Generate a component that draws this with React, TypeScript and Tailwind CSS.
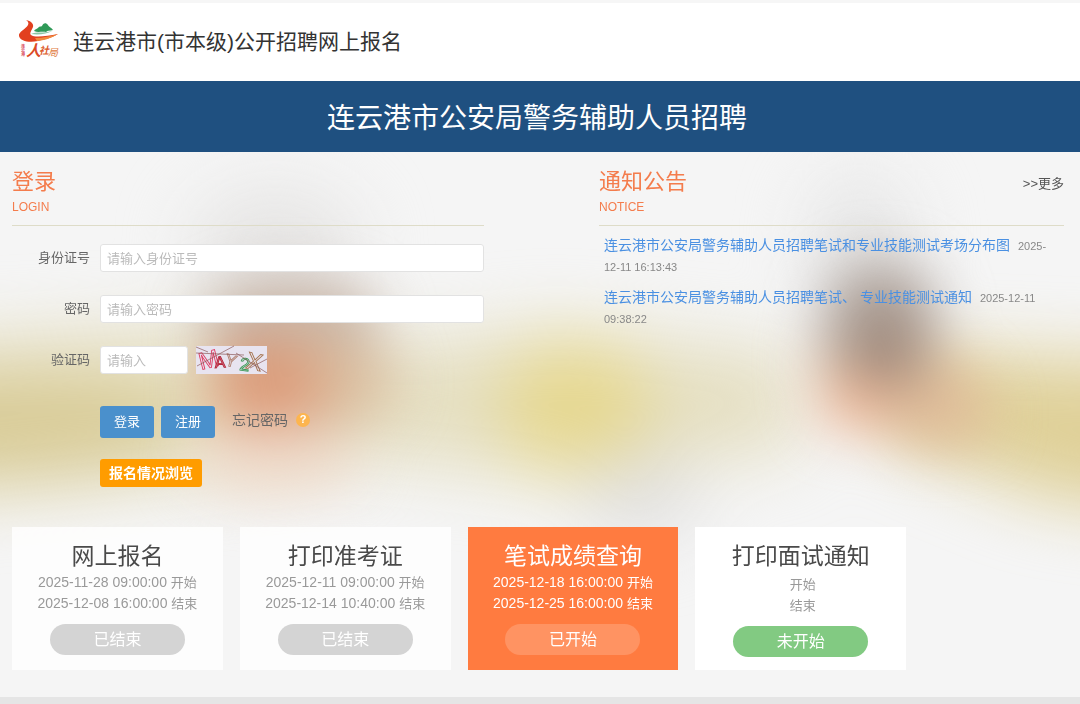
import { useState } from "react";
import type { FormEvent } from "react";

const notices = [
  {
    title: "连云港市公安局警务辅助人员招聘笔试和专业技能测试考场分布图",
    date: "2025-12-11 16:13:43",
  },
  {
    title: "连云港市公安局警务辅助人员招聘笔试、 专业技能测试通知",
    date: "2025-12-11 09:38:22",
  },
];

const steps = [
  {
    title: "网上报名",
    start: "2025-11-28 09:00:00",
    end: "2025-12-08 16:00:00",
    status: "已结束",
    card: "bg-white/80 pb-[15px]",
    heading: "text-[#4a4a4a]",
    dates: "text-[#999]",
    button: "bg-[#d4d4d4]",
  },
  {
    title: "打印准考证",
    start: "2025-12-11 09:00:00",
    end: "2025-12-14 10:40:00",
    status: "已结束",
    card: "bg-white/80 pb-[15px]",
    heading: "text-[#4a4a4a]",
    dates: "text-[#999]",
    button: "bg-[#d4d4d4]",
  },
  {
    title: "笔试成绩查询",
    start: "2025-12-18 16:00:00",
    end: "2025-12-25 16:00:00",
    status: "已开始",
    card: "bg-[#ff7b40] pb-[15px]",
    heading: "text-white",
    dates: "text-white",
    button: "bg-[#ff9362]",
  },
  {
    title: "打印面试通知",
    start: "",
    end: "",
    status: "未开始",
    card: "bg-white pb-[13px]",
    heading: "text-[#4a4a4a]",
    dates: "pt-0.5 text-[#999]",
    button: "bg-[#82ca82]",
  },
];

const inputClass =
  "h-7 rounded-[3px] border border-[#e2e2e2] bg-white px-1.5 text-[13px] text-[#333] placeholder:text-[#bbb] focus:outline-none";

function Logo() {
  return (
    <svg viewBox="0 0 44 42" className="h-[42px] w-11 shrink-0 overflow-visible" aria-hidden="true">
      <path
        d="M9 -1C14 0 17 3 16 6C15 9 12 12 14 14C18 17 30 15 41 13C37 16 29 18 21 20C12 22 3 20 2 15C1 11 9 8 11 4C12 2 11 0 9 -1Z"
        fill="#e2401f"
      />
      <path d="M18 17C26 17 34 15 41 13C36 16 30 19 20 20Z" fill="#f08a3c" />
      <path
        d="M17 10C18 8 20 8 21 7C22 5 24 6 25 5C26 2 29 1 31 4C32 6 34 6 36 9C33 10 31 9 29 11C25 10 21 12 17 10Z"
        fill="#2f9a58"
      />
      <path d="M14 13C19 10 26 13 35 10C30 13 22 14 14 13Z" fill="#8cc7a5" />
      <g fontFamily="'Noto Sans CJK SC', sans-serif">
        <text fontSize="4" fontWeight="700" fill="#d8485c">
          <tspan x="4" y="27">连</tspan>
          <tspan x="4" y="31">云</tspan>
          <tspan x="4" y="35">港</tspan>
        </text>
        <text x="9" y="35" fontSize="15" fontWeight="700" fontStyle="italic" fill="#dc4a26">人</text>
        <text x="22" y="33" fontSize="10" fontWeight="700" fontStyle="italic" fill="#dc5a2a">社</text>
        <text x="31" y="35" fontSize="10" fontStyle="italic" fill="#e07a40">局</text>
      </g>
    </svg>
  );
}

function Captcha() {
  return (
    <svg viewBox="0 0 71 28" className="h-7 w-[71px] overflow-visible" role="img" aria-label="验证码">
      <rect width="71" height="28" fill="#e8e4f0" />
      <g fontFamily="'Liberation Sans', sans-serif" fill="none" strokeWidth="0.9">
        <text fontSize="24" stroke="#dc3c62" transform="translate(5 24) rotate(-14)">M</text>
        <text fontSize="16" stroke="#b3263c" fill="#d88090" transform="translate(19 22) rotate(-4)">A</text>
        <text fontSize="17" stroke="#b08070" transform="translate(28 19) rotate(14)">Y</text>
        <text fontSize="18" stroke="#3d9a58" transform="translate(43 24) rotate(8)">2</text>
        <text fontSize="24" stroke="#a5734f" transform="translate(49 22) rotate(12)">X</text>
      </g>
      <path
        d="M0 1L12 6M1 20L38 0M0 7L48 9M40 7L71 27M54 22L71 13"
        fill="none"
        stroke="#8d5a5a"
        strokeWidth="0.7"
      />
    </svg>
  );
}

// soft out-of-focus photo behind the form
function Backdrop() {
  return (
    <svg
      viewBox="0 0 1080 545"
      preserveAspectRatio="none"
      className="absolute inset-0 h-full w-full"
      aria-hidden="true"
    >
      <defs>
        <filter id="soft" x="-80%" y="-80%" width="260%" height="260%" colorInterpolationFilters="sRGB">
          <feGaussianBlur stdDeviation="34" />
        </filter>
        <filter id="mid" x="-80%" y="-80%" width="260%" height="260%" colorInterpolationFilters="sRGB">
          <feGaussianBlur stdDeviation="27" />
        </filter>
      </defs>
      <rect width="1080" height="545" fill="#f5f5f5" />
      <g filter="url(#soft)">
        <path d="M-100 190L200 175L420 190L560 175L680 190L790 200L800 300L670 310L620 335L440 315L330 305L200 320L-100 350Z" fill="#e5dfc2" />
        <ellipse cx="20" cy="275" rx="170" ry="55" fill="#d9cc98" />
        <ellipse cx="575" cy="255" rx="75" ry="66" fill="#e6d890" />
        <ellipse cx="640" cy="345" rx="60" ry="45" fill="#e2e1e0" />
        <ellipse cx="275" cy="95" rx="85" ry="60" fill="#e6e5e4" />
        <ellipse cx="860" cy="90" rx="50" ry="70" fill="#e6e6e6" />
        <path d="M920 200L1180 210L1180 365L1040 345L880 280Z" fill="#dfd098" />
      </g>
      <g filter="url(#mid)">
        <ellipse cx="290" cy="170" rx="90" ry="42" fill="#c4b2a6" />
        <ellipse cx="300" cy="230" rx="95" ry="50" fill="#dabd9f" />
        <ellipse cx="265" cy="235" rx="58" ry="50" fill="#dc9c7a" />
        <ellipse cx="275" cy="310" rx="85" ry="34" fill="#efdccd" />
        <ellipse cx="900" cy="235" rx="95" ry="48" fill="#dfbb98" transform="rotate(24 900 235)" />
        <ellipse cx="880" cy="170" rx="58" ry="62" fill="#aea39c" />
        <ellipse cx="888" cy="198" rx="38" ry="40" fill="#a08a7c" />
        <ellipse cx="855" cy="252" rx="38" ry="26" fill="#eeb493" />
      </g>
    </svg>
  );
}

export default function App() {
  const [form, setForm] = useState({ idCard: "", password: "", code: "" });

  const handleChange = (e: { target: { name: string; value: string } }) => {
    const { name, value } = e.target;
    setForm((prev) => ({ ...prev, [name]: value }));
  };

  const handleSubmit = (e: FormEvent) => {
    e.preventDefault();
  };

  return (
    <div className="min-h-screen bg-[#e5e5e5] font-['Liberation_Sans','Noto_Sans_CJK_SC',sans-serif] text-[#666]">
      <header className="flex h-[81px] items-center gap-3 border-t-[3px] border-[#f6f6f6] bg-white px-[17px]">
        <Logo />
        <h1 className="text-[21px] leading-8 text-[#333]">连云港市(市本级)公开招聘网上报名</h1>
      </header>

      <div className="bg-[#1f5080] pt-[18px] pr-1.5 pb-3.5 text-center text-[28px] leading-[39px] text-white">
        连云港市公安局警务辅助人员招聘
      </div>

      <main className="relative overflow-hidden">
        <Backdrop />
        <div className="relative pt-3.5 pr-4 pb-[27px] pl-3">
          <div className="grid grid-cols-[472fr_465fr] gap-[115px]">
            <section>
              <div className="mb-[18px] border-b border-[#dedcc8] pb-2 text-[#f47c4c]">
                <h2 className="text-[22px] leading-8">登录</h2>
                <p className="text-xs leading-[19px]">LOGIN</p>
              </div>
              <form onSubmit={handleSubmit}>
                <div className="mb-[23px] flex items-center gap-2.5">
                  <label htmlFor="idCard" className="w-[78px] text-right text-[13px]">
                    身份证号
                  </label>
                  <input
                    type="text"
                    id="idCard"
                    name="idCard"
                    value={form.idCard}
                    onChange={handleChange}
                    placeholder="请输入身份证号"
                    className={`${inputClass} min-w-0 flex-1`}
                  />
                </div>
                <div className="mb-[23px] flex items-center gap-2.5">
                  <label htmlFor="password" className="w-[78px] text-right text-[13px]">
                    密码
                  </label>
                  <input
                    type="password"
                    id="password"
                    name="password"
                    value={form.password}
                    onChange={handleChange}
                    placeholder="请输入密码"
                    className={`${inputClass} min-w-0 flex-1`}
                  />
                </div>
                <div className="mb-8 flex items-center gap-2.5">
                  <label htmlFor="code" className="w-[78px] text-right text-[13px]">
                    验证码
                  </label>
                  <div className="flex gap-2">
                    <input
                      type="text"
                      id="code"
                      name="code"
                      value={form.code}
                      onChange={handleChange}
                      placeholder="请输入"
                      className={`${inputClass} w-[88px]`}
                    />
                    <Captcha />
                  </div>
                </div>
                <div className="pl-[88px]">
                  <div className="mb-[21px] flex gap-[7px]">
                    <button type="submit" className="h-8 w-[54px] rounded-[3px] bg-[#4a90cc] text-[13px] text-white">
                      登录
                    </button>
                    <button type="button" className="h-8 w-[54px] rounded-[3px] bg-[#4a90cc] text-[13px] text-white">
                      注册
                    </button>
                    <a href="#forgot" className="ml-2.5 flex h-7 items-center gap-2 text-sm text-[#666]">
                      忘记密码
                      <span className="flex size-3.5 items-center justify-center rounded-full bg-[#fdb54e] text-[11px] font-bold text-white">
                        ?
                      </span>
                    </a>
                  </div>
                  <button type="button" className="h-7 rounded-[3px] bg-[#ff9c00] px-[9px] text-sm font-bold text-white">
                    报名情况浏览
                  </button>
                </div>
              </form>
            </section>

            <section>
              <div className="mb-[9px] flex items-start justify-between border-b border-[#dedcc8] pb-2 text-[#f47c4c]">
                <div>
                  <h2 className="text-[22px] leading-8">通知公告</h2>
                  <p className="text-xs leading-[19px]">NOTICE</p>
                </div>
                <a href="#more" className="text-[13px] leading-9 text-[#555]">
                  &gt;&gt;更多
                </a>
              </div>
              <ul className="pr-4 pl-[5px]">
                {notices.map((notice) => (
                  <li key={notice.title} className="mb-[9px] text-[11px] leading-[21px] text-[#888]">
                    <a href="#notice" className="mr-2 text-sm leading-[21px] text-[#4a90e2]">
                      {notice.title}
                    </a>
                    {notice.date}
                  </li>
                ))}
              </ul>
            </section>
          </div>

          <div className="mt-10 grid w-[85%] grid-cols-4 gap-[17px]">
            {steps.map((step) => (
              <section key={step.title} className={`pt-[13px] text-center ${step.card}`}>
                <h3 className={`text-[23px] leading-8 ${step.heading}`}>{step.title}</h3>
                <div className={`text-sm leading-[21px] ${step.dates}`}>
                  <p>
                    {step.start}&nbsp;<span className="text-[13px]">开始</span>
                  </p>
                  <p>
                    {step.end}&nbsp;<span className="text-[13px]">结束</span>
                  </p>
                </div>
                <button type="button" className={`mt-2.5 h-[31px] w-[135px] rounded-full text-base text-white ${step.button}`}>
                  {step.status}
                </button>
              </section>
            ))}
          </div>
        </div>
      </main>
    </div>
  );
}
